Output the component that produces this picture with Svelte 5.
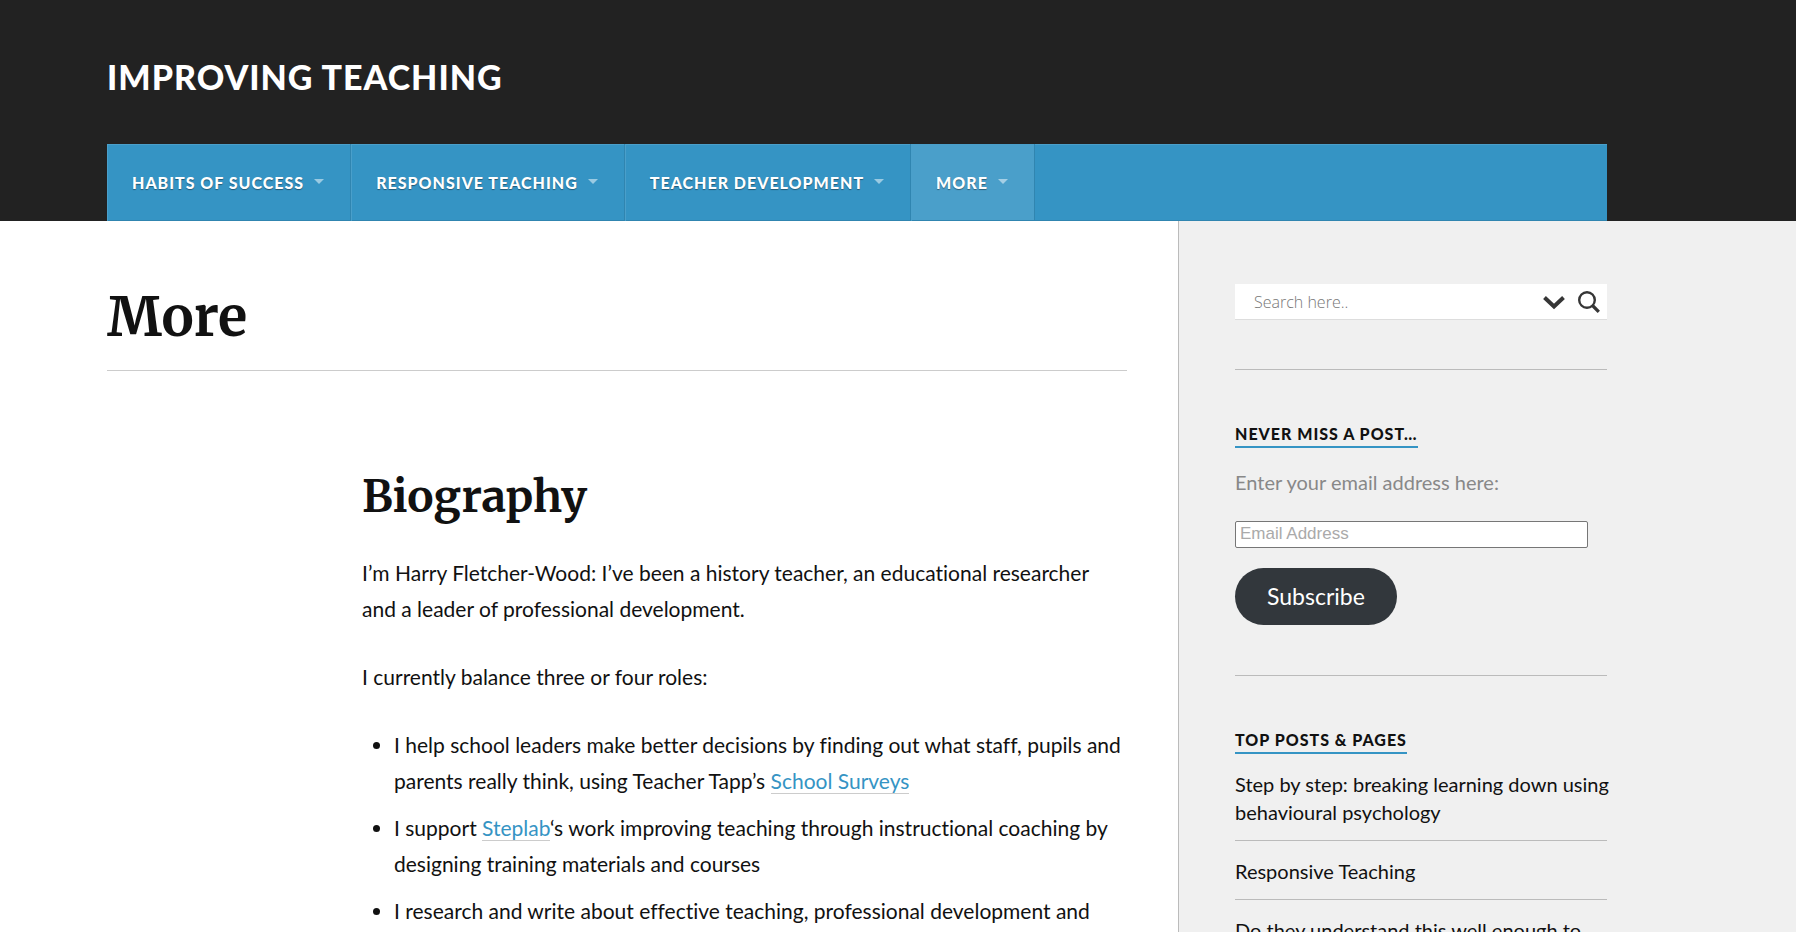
<script>
  const nav = [
    { label: 'Habits of Success' },
    { label: 'Responsive Teaching' },
    { label: 'Teacher Development' },
    { label: 'More', current: true }
  ];
  const posts = [
    'Step by step: breaking learning down using behavioural psychology',
    'Responsive Teaching',
    'Do they understand this well enough to'
  ];
  let query = $state('');
  let email = $state('');
</script>

<div class="page">
  <header>
    <a class="site-title" href="#home">Improving Teaching</a>
    <nav aria-label="Main">
      <ul>
        {#each nav as item}
          <li class:current={item.current}>
            <a href="#menu">
              <span>{item.label}</span>
              <svg width="10" height="5" viewBox="0 0 10 5" aria-hidden="true"><path d="M0 0h10L5 5z" fill="#fff" fill-opacity=".5" /></svg>
            </a>
          </li>
        {/each}
      </ul>
    </nav>
  </header>

  <div class="body">
    <main>
      <h1>More</h1>
      <article>
        <h2>Biography</h2>
        <p>I’m Harry Fletcher-Wood: I’ve been a history teacher, an educational researcher and a leader of professional development.</p>
        <p>I currently balance three or four roles:</p>
        <ul>
          <li>I help school leaders make better decisions by finding out what staff, pupils and parents really think, using Teacher Tapp’s <a href="#surveys">School Surveys</a></li>
          <li>I support <a href="#steplab">Steplab</a>‘s work improving teaching through instructional coaching by designing training materials and courses</li>
          <li>I research and write about effective teaching, professional development and</li>
        </ul>
      </article>
    </main>

    <aside>
      <section>
        <form class="search" onsubmit={(e) => e.preventDefault()}>
          <input type="search" aria-label="Search" placeholder="Search here.." bind:value={query} />
          <button type="button" aria-label="Search options">
            <svg width="22" height="22" viewBox="0 0 22 22"><path d="M1.500 6.500 11 15.500l9.500-9" fill="none" stroke="#363636" stroke-width="4" /></svg>
          </button>
          <button type="submit" aria-label="Submit search">
            <svg width="22" height="22" viewBox="0 0 22 22"><circle cx="9" cy="9" r="7.800" fill="none" stroke="#363636" stroke-width="2.400" /><path d="m14.500 14.500 6.300 6.300" stroke="#363636" stroke-width="3.200" /></svg>
          </button>
        </form>
      </section>

      <section>
        <h3>Never miss a post…</h3>
        <form class="subscribe" onsubmit={(e) => e.preventDefault()}>
          <label for="email">Enter your email address here:</label>
          <input id="email" type="email" placeholder="Email Address" bind:value={email} />
          <button type="submit">Subscribe</button>
        </form>
      </section>

      <section>
        <h3>Top Posts &amp; Pages</h3>
        <ul>
          {#each posts as post}
            <li><a href="#post">{post}</a></li>
          {/each}
        </ul>
      </section>
    </aside>
  </div>
</div>

<style>
  :global(body) {
    margin: 0;
    background: #fff;
  }
  .page {
    display: flex;
    flex-direction: column;
    height: 100vh;
    overflow: hidden;
    color: #111;
    font-family: Lato, sans-serif;
    font-variant-ligatures: none;
  }
  ul,
  h1,
  h2,
  h3,
  p {
    margin: 0;
    padding: 0;
  }
  a {
    color: inherit;
    text-decoration: none;
  }
  header {
    flex: none;
    padding: 57px 189px 0 107px;
    background: #222;
  }
  .site-title {
    display: block;
    margin-bottom: 47px;
    color: #fff;
    font-size: 34px;
    font-weight: 900;
    line-height: 40px;
    letter-spacing: 1px;
    text-transform: uppercase;
  }
  nav {
    background: #3594c4;
    box-shadow: inset 1px 1px 0 #4a9fca, inset 0 -1px 0 #3085b0;
  }
  nav ul {
    display: flex;
    list-style: none;
  }
  nav li {
    border-left: 1px solid #4a9fca;
    border-right: 1px solid #3085b0;
  }
  nav li.current {
    background: #4a9fca;
    box-shadow: inset 0 -1px 0 #3085b0;
  }
  nav a {
    display: flex;
    align-items: center;
    gap: 10px;
    padding: 0 26px 0 24px;
    color: #fff;
    font-size: 16px;
    font-weight: 900;
    line-height: 77px;
    letter-spacing: 1px;
    text-transform: uppercase;
    text-shadow: 0 1px 1px rgba(0, 0, 0, 0.4);
  }
  nav svg {
    margin-bottom: 2px;
  }
  .body {
    display: flex;
    flex: 1;
    min-height: 0;
  }
  main {
    flex: 1;
    min-width: 0;
    padding: 65px 51px 0 107px;
  }
  h1,
  h2 {
    font-family: Merriweather, "DejaVu Serif", serif;
    font-weight: 700;
  }
  h1 {
    padding-bottom: 22px;
    border-bottom: 1px solid #ccc;
    font-size: 54px;
    line-height: 62px;
  }
  article {
    padding: 100px 0 0 25%;
    font-size: 21px;
    line-height: 36px;
  }
  h2 {
    margin-bottom: 32px;
    font-size: 44px;
    line-height: 52px;
  }
  p {
    margin-bottom: 32px;
  }
  article ul {
    padding-left: 32px;
  }
  article li {
    margin-bottom: 11px;
  }
  article a {
    border-bottom: 1px solid #ccc;
    color: #3594c4;
  }
  aside {
    flex: none;
    box-sizing: border-box;
    width: 618px;
    padding: 63px 189px 0 56px;
    border-left: 1px solid #bbb;
    background: #f0f0f0;
  }
  section + section {
    margin-top: 50px;
    padding-top: 54px;
    border-top: 1px solid #bbb;
  }
  .search {
    display: flex;
    align-items: center;
    gap: 13px;
    height: 35px;
    padding: 0 7px 0 19px;
    background: #fff;
    box-shadow: 0 1px 0 #ddd;
  }
  .search input {
    flex: 1;
    min-width: 0;
    padding: 0;
    border: 0;
    outline: 0;
    background: none;
    font: 300 16px "Open Sans", sans-serif;
  }
  .search input::placeholder {
    color: #777;
  }
  .search button {
    display: flex;
    padding: 0;
    border: 0;
    background: none;
  }
  h3 {
    width: fit-content;
    padding-bottom: 2px;
    border-bottom: 2px solid #3594c4;
    font-size: 16px;
    font-weight: 900;
    line-height: 20px;
    letter-spacing: 1px;
    text-transform: uppercase;
  }
  .subscribe {
    display: flex;
    flex-direction: column;
    align-items: flex-start;
    margin-top: 19px;
  }
  .subscribe label {
    color: #888;
    font-size: 20px;
    line-height: 30px;
  }
  .subscribe input {
    box-sizing: border-box;
    width: 95%;
    height: 27px;
    margin: 24px 0 20px;
    padding: 0 4px 2px;
    border: 1px solid #767676;
    border-radius: 2px;
    background: #fff;
    font: 17px "Liberation Sans", sans-serif;
  }
  .subscribe input::placeholder {
    color: #aaa;
  }
  .subscribe button {
    padding: 0 32px;
    border: 0;
    border-radius: 29px;
    background: #32373c;
    color: #fff;
    font: 23px/57px Lato, sans-serif;
  }
  aside ul {
    margin-top: 16px;
    list-style: none;
  }
  aside li {
    padding-bottom: 14px;
    font-size: 20px;
    line-height: 28px;
  }
  aside li a {
    display: block;
    margin-right: -8px;
  }
  aside li + li {
    padding-top: 16px;
    border-top: 1px solid #bbb;
  }
</style>
